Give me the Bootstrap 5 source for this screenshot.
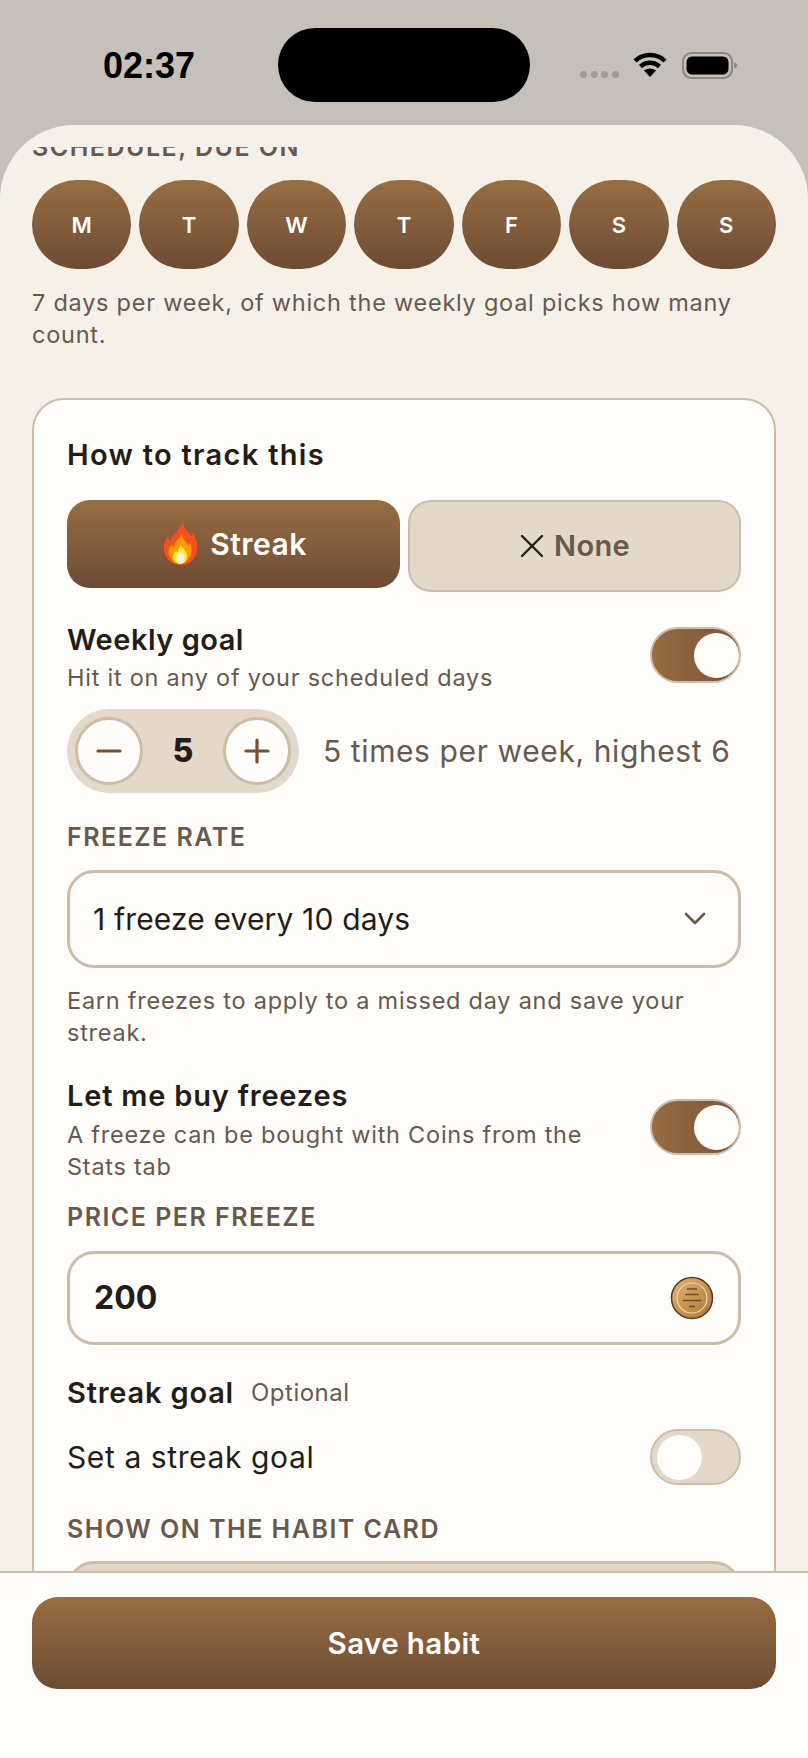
<!doctype html>
<html lang="en">
<head>
<meta charset="utf-8">
<title>Habit settings</title>
<link href="https://cdn.jsdelivr.net/npm/bootstrap@5.3.0/dist/css/bootstrap.min.css" rel="stylesheet">
<style>
:root{--ink:#241c16;--muted:#67594d;--line:#cdbca8;--sand:#e3d8c9;--paper:#fffdfa;--sheet:#f5f1e9;--grad:linear-gradient(180deg,#986d43,#6d4c34)}
html,body{height:100%}
body{width:808px;height:1758px;overflow:hidden;background:#c5c0b9;font-family:Inter,"Liberation Sans",sans-serif;color:var(--ink)}
.statusbar{height:125px;flex:none;display:grid;grid-template-columns:1fr 252px 1fr;align-items:start;padding-top:28px}
.clock{font:700 36px/76px "Liberation Sans",sans-serif;color:#000;padding-left:103px}
.island{height:74px;background:#000;border-radius:37px}
.sysicons{height:74px;padding-left:50px}
.sigs{gap:3.700px;margin-top:19px;margin-right:14px}
.sig{width:7px;height:7px;border-radius:50%;background:#a19c96}
.wifi{margin-right:15px}
.sheet{flex:1;min-height:0;background:var(--sheet);border-radius:74px 74px 0 0;overflow:hidden;padding-top:22px}
.scrollpane{height:1424px;overflow:hidden;padding:0 32px}
.cap{font-size:25px;line-height:30px;font-weight:600;letter-spacing:1.5px;color:var(--muted);text-transform:uppercase}
.cap-clipped{margin-top:-15px;margin-bottom:18px}
.daybtn{flex:1;height:89px;border-radius:45px;border:0;background:var(--grad);color:#fff;font-size:22px;font-weight:600;padding:1px 0 0}
.note{font-size:23.500px;line-height:32px;color:var(--muted);letter-spacing:.75px}
.note-first{margin-top:18px}
.habit-card{margin-top:47px;background:var(--paper);border:2px solid var(--line);border-radius:32px;padding:38px 33px 32px}
.ttl{font-size:29px;line-height:34px;font-weight:600;letter-spacing:.8px}
.ttl-wide{letter-spacing:1.300px;margin-bottom:28px}
.ttl-tight{letter-spacing:.5px}
.seg{width:333px;flex:none;height:92px;border-radius:23px;font-size:29px;font-weight:600;padding:0}
.seg-on,.seg-on:hover{background:var(--grad);color:#fff;border:0;height:88px;gap:12px;font-size:30px;letter-spacing:.5px;padding-left:4px}
.seg-off,.seg-off:hover{background:var(--sand);color:var(--muted);border:2px solid var(--line);gap:10px;letter-spacing:.3px;padding-left:1px}
.tog{width:91px;height:56px;flex:none;border-radius:28px;border:2px solid var(--line);padding:4px 0}
.tog-on{background:linear-gradient(90deg,#986d43,#7a5235)}
.tog-off{background:var(--sand);padding-left:5px}
.knob{width:45px;height:45px;border-radius:50%;background:var(--paper)}
.stepper{width:232px;height:84px;border-radius:42px;background:var(--sand);padding:8px}
.stepbtn{width:68px;height:68px;border-radius:50%;background:var(--paper);border:3px solid var(--line);padding:0}
.stepnum{font-size:32px;font-weight:800}
.stepnote{font-size:30px;color:var(--muted);letter-spacing:.6px}
.fieldbox,.fieldbox:focus{border:3px solid var(--line);border-radius:27px;background-color:var(--paper);color:var(--ink);box-shadow:none}
.rate{height:98px;font-size:30px;padding:0 23px;letter-spacing:.15px;background-image:url("data:image/svg+xml,%3csvg xmlns='http://www.w3.org/2000/svg' viewBox='0 0 22 14'%3e%3cpath d='M2 2l9 9 9-9' fill='none' stroke='%2367594d' stroke-width='2.6' stroke-linecap='round' stroke-linejoin='round'/%3e%3c/svg%3e");background-size:22px 14px;background-position:right 32px center}
.pricewrap{height:94px;padding:0 24px}
.price{font-size:32px;font-weight:700;border:0;background:transparent;padding:0;color:var(--ink)}
.price:focus{background:transparent;box-shadow:none}
.coin{flex:none}
.opt{font-size:24px;color:var(--muted);letter-spacing:.5px}
.goal-line{font-size:30px;letter-spacing:.6px}
.shown-box{height:90px;background:var(--sand);border:3px solid var(--line);border-radius:27px}
.savebar{height:187px;flex:none;background:var(--paper);border-top:2px solid var(--line);padding:24px 32px 0;margin-top:-2px}
.savebtn,.savebtn:hover{height:92px;background:var(--grad);color:#fff;border:0;border-radius:26px;font-size:29.500px;font-weight:600;letter-spacing:.4px}
.row-weekly{margin-top:31px}
.sub-weekly{margin-top:5px}
.tog-weekly{margin-top:4px}
.row-step{margin-top:15px;gap:24px}
.cap-rate{margin-top:29px;margin-bottom:18px}
.note-earn{margin-top:17px}
.row-buy{margin-top:30px}
.col-buy{width:540px}
.sub-buy{margin-top:6px}
.tog-buy{margin-top:20px}
.cap-price{margin-top:19px;margin-bottom:19px}
.row-streak{margin-top:30px;gap:17px}
.row-set{margin-top:18px}
.cap-show{margin-top:29px;margin-bottom:17px}
</style>
</head>
<body class="d-flex flex-column">
<div class="statusbar">
  <div class="clock">02:37</div>
  <div class="island"></div>
  <div class="sysicons d-flex align-items-center">
    <div class="sigs d-flex"><span class="sig"></span><span class="sig"></span><span class="sig"></span><span class="sig"></span></div>
    <svg width="34" height="26" viewBox="0 0 34 26" class="wifi" aria-hidden="true"><path d="M2 9C10 1 24 1 32 9" fill="none" stroke="#000" stroke-width="4.4"/><path d="M7.5 14.5C13 9.5 21 9.500 26.5 14.5" fill="none" stroke="#000" stroke-width="4.4"/><path d="M17 25l-6-6.500c3.500-2.800 8.500-2.800 12 0z" fill="#000"/></svg>
    <svg width="55" height="27" viewBox="0 0 55 27" aria-hidden="true"><rect x="1" y="1" width="49" height="25" rx="8.500" fill="none" stroke="#8f867c" stroke-width="2"/><rect x="4.500" y="4.500" width="42" height="18" rx="5.500" fill="#000"/><path d="M52 10.500c1.800.5 3 1.500 3 3s-1.200 2.500-3 3z" fill="#8f867c"/></svg>
  </div>
</div>
<main class="sheet">
  <div class="scrollpane">
    <div class="cap cap-clipped">Schedule, due on</div>
    <div class="d-flex gap-2">
      <button class="daybtn">M</button><button class="daybtn">T</button><button class="daybtn">W</button><button class="daybtn">T</button><button class="daybtn">F</button><button class="daybtn">S</button><button class="daybtn">S</button>
    </div>
    <p class="note note-first mb-0">7 days per week, of which the weekly goal picks how many count.</p>
    <section class="habit-card">
      <div class="ttl ttl-wide">How to track this</div>
      <div class="d-flex gap-2 align-items-start">
        <button class="btn seg seg-on d-flex align-items-center justify-content-center">
          <svg width="34" height="42" viewBox="0 0 34 42" aria-hidden="true"><path d="M19 0c1 6 5 8 8 13 1-1 1-3 1-4 4 5 6 11 5 18-1 9-8 15-16 15C8 42 1 36 0 27c-1-5 1-10 4-14 0 2 1 4 3 5C8 11 15 7 19 0z" fill="#f4511e"/><path d="M18 11c0 5 4 7 6 11 1 0 2-1 2-2 2 4 2 8 1 11-2 6-6 10-11 10S7 37 5 32c-1-4 0-7 2-10 1 1 2 2 3 2 0-5 5-8 8-13z" fill="#ff9800"/><path d="M17 22c1 3 6 6 6 11 0 5-3 8-7 8s-7-3-7-7c0-3 2-5 3-6 1 1 1 1 2 1 0-3 2-5 3-7z" fill="#ffeb3b"/><ellipse cx="16.500" cy="35" rx="4" ry="5.500" fill="#f1efe9"/></svg>
          <span>Streak</span>
        </button>
        <button class="btn seg seg-off d-flex align-items-center justify-content-center">
          <svg width="24" height="24" viewBox="0 0 24 24" aria-hidden="true"><path d="M2 2l20 20M22 2L2 22" stroke="#241c16" stroke-width="2.400" stroke-linecap="round"/></svg>
          <span>None</span>
        </button>
      </div>
      <div class="d-flex justify-content-between row-weekly">
        <div><div class="ttl ttl-tight">Weekly goal</div><div class="note sub-weekly">Hit it on any of your scheduled days</div></div>
        <div class="tog tog-on tog-weekly d-flex justify-content-end"><span class="knob"></span></div>
      </div>
      <div class="d-flex align-items-center row-step">
        <div class="stepper d-flex align-items-center justify-content-between">
          <button class="stepbtn d-flex align-items-center justify-content-center" aria-label="less"><svg width="26" height="26" viewBox="0 0 26 26" aria-hidden="true"><path d="M2 13h22" stroke="#7a4f2e" stroke-width="3.200" stroke-linecap="round"/></svg></button>
          <span class="stepnum">5</span>
          <button class="stepbtn d-flex align-items-center justify-content-center" aria-label="more"><svg width="26" height="26" viewBox="0 0 26 26" aria-hidden="true"><path d="M2 13h22M13 2v22" stroke="#7a4f2e" stroke-width="3.200" stroke-linecap="round"/></svg></button>
        </div>
        <span class="stepnote">5 times per week, highest 6</span>
      </div>
      <div class="cap cap-rate">Freeze rate</div>
      <select class="form-select fieldbox rate"><option>1 freeze every 10 days</option></select>
      <p class="note note-earn mb-0">Earn freezes to apply to a missed day and save your streak.</p>
      <div class="d-flex justify-content-between row-buy">
        <div class="col-buy"><div class="ttl">Let me buy freezes</div><div class="note sub-buy">A freeze can be bought with Coins from the Stats tab</div></div>
        <div class="tog tog-on tog-buy d-flex justify-content-end"><span class="knob"></span></div>
      </div>
      <div class="cap cap-price">Price per freeze</div>
      <div class="fieldbox pricewrap d-flex align-items-center">
        <input class="form-control price" value="200" aria-label="Price per freeze">
        <svg width="44" height="44" viewBox="0 0 44 44" class="coin" aria-hidden="true"><defs><linearGradient id="cg" x1="0" y1="0" x2="1" y2="1"><stop offset="0" stop-color="#e5b56e"/><stop offset="1" stop-color="#a9773c"/></linearGradient></defs><circle cx="22" cy="22" r="20.500" fill="url(#cg)" stroke="#4e3a2a" stroke-width="1.500"/><circle cx="22" cy="22" r="15" fill="none" stroke="#f0d6a4" stroke-width="1.200"/><path d="M17 13h10M15.500 18.500h13M13 24.500h18M19 30.500h6" stroke="#6d4c34" stroke-width="1.700"/></svg>
      </div>
      <div class="d-flex align-items-center row-streak"><span class="ttl">Streak goal</span><span class="opt">Optional</span></div>
      <div class="d-flex justify-content-between align-items-center row-set">
        <span class="goal-line">Set a streak goal</span>
        <div class="tog tog-off d-flex"><span class="knob"></span></div>
      </div>
      <div class="cap cap-show">Show on the habit card</div>
      <div class="shown-box"></div>
    </section>
  </div>
</main>
<footer class="savebar">
  <button class="btn savebtn w-100">Save habit</button>
</footer>
</body>
</html>
